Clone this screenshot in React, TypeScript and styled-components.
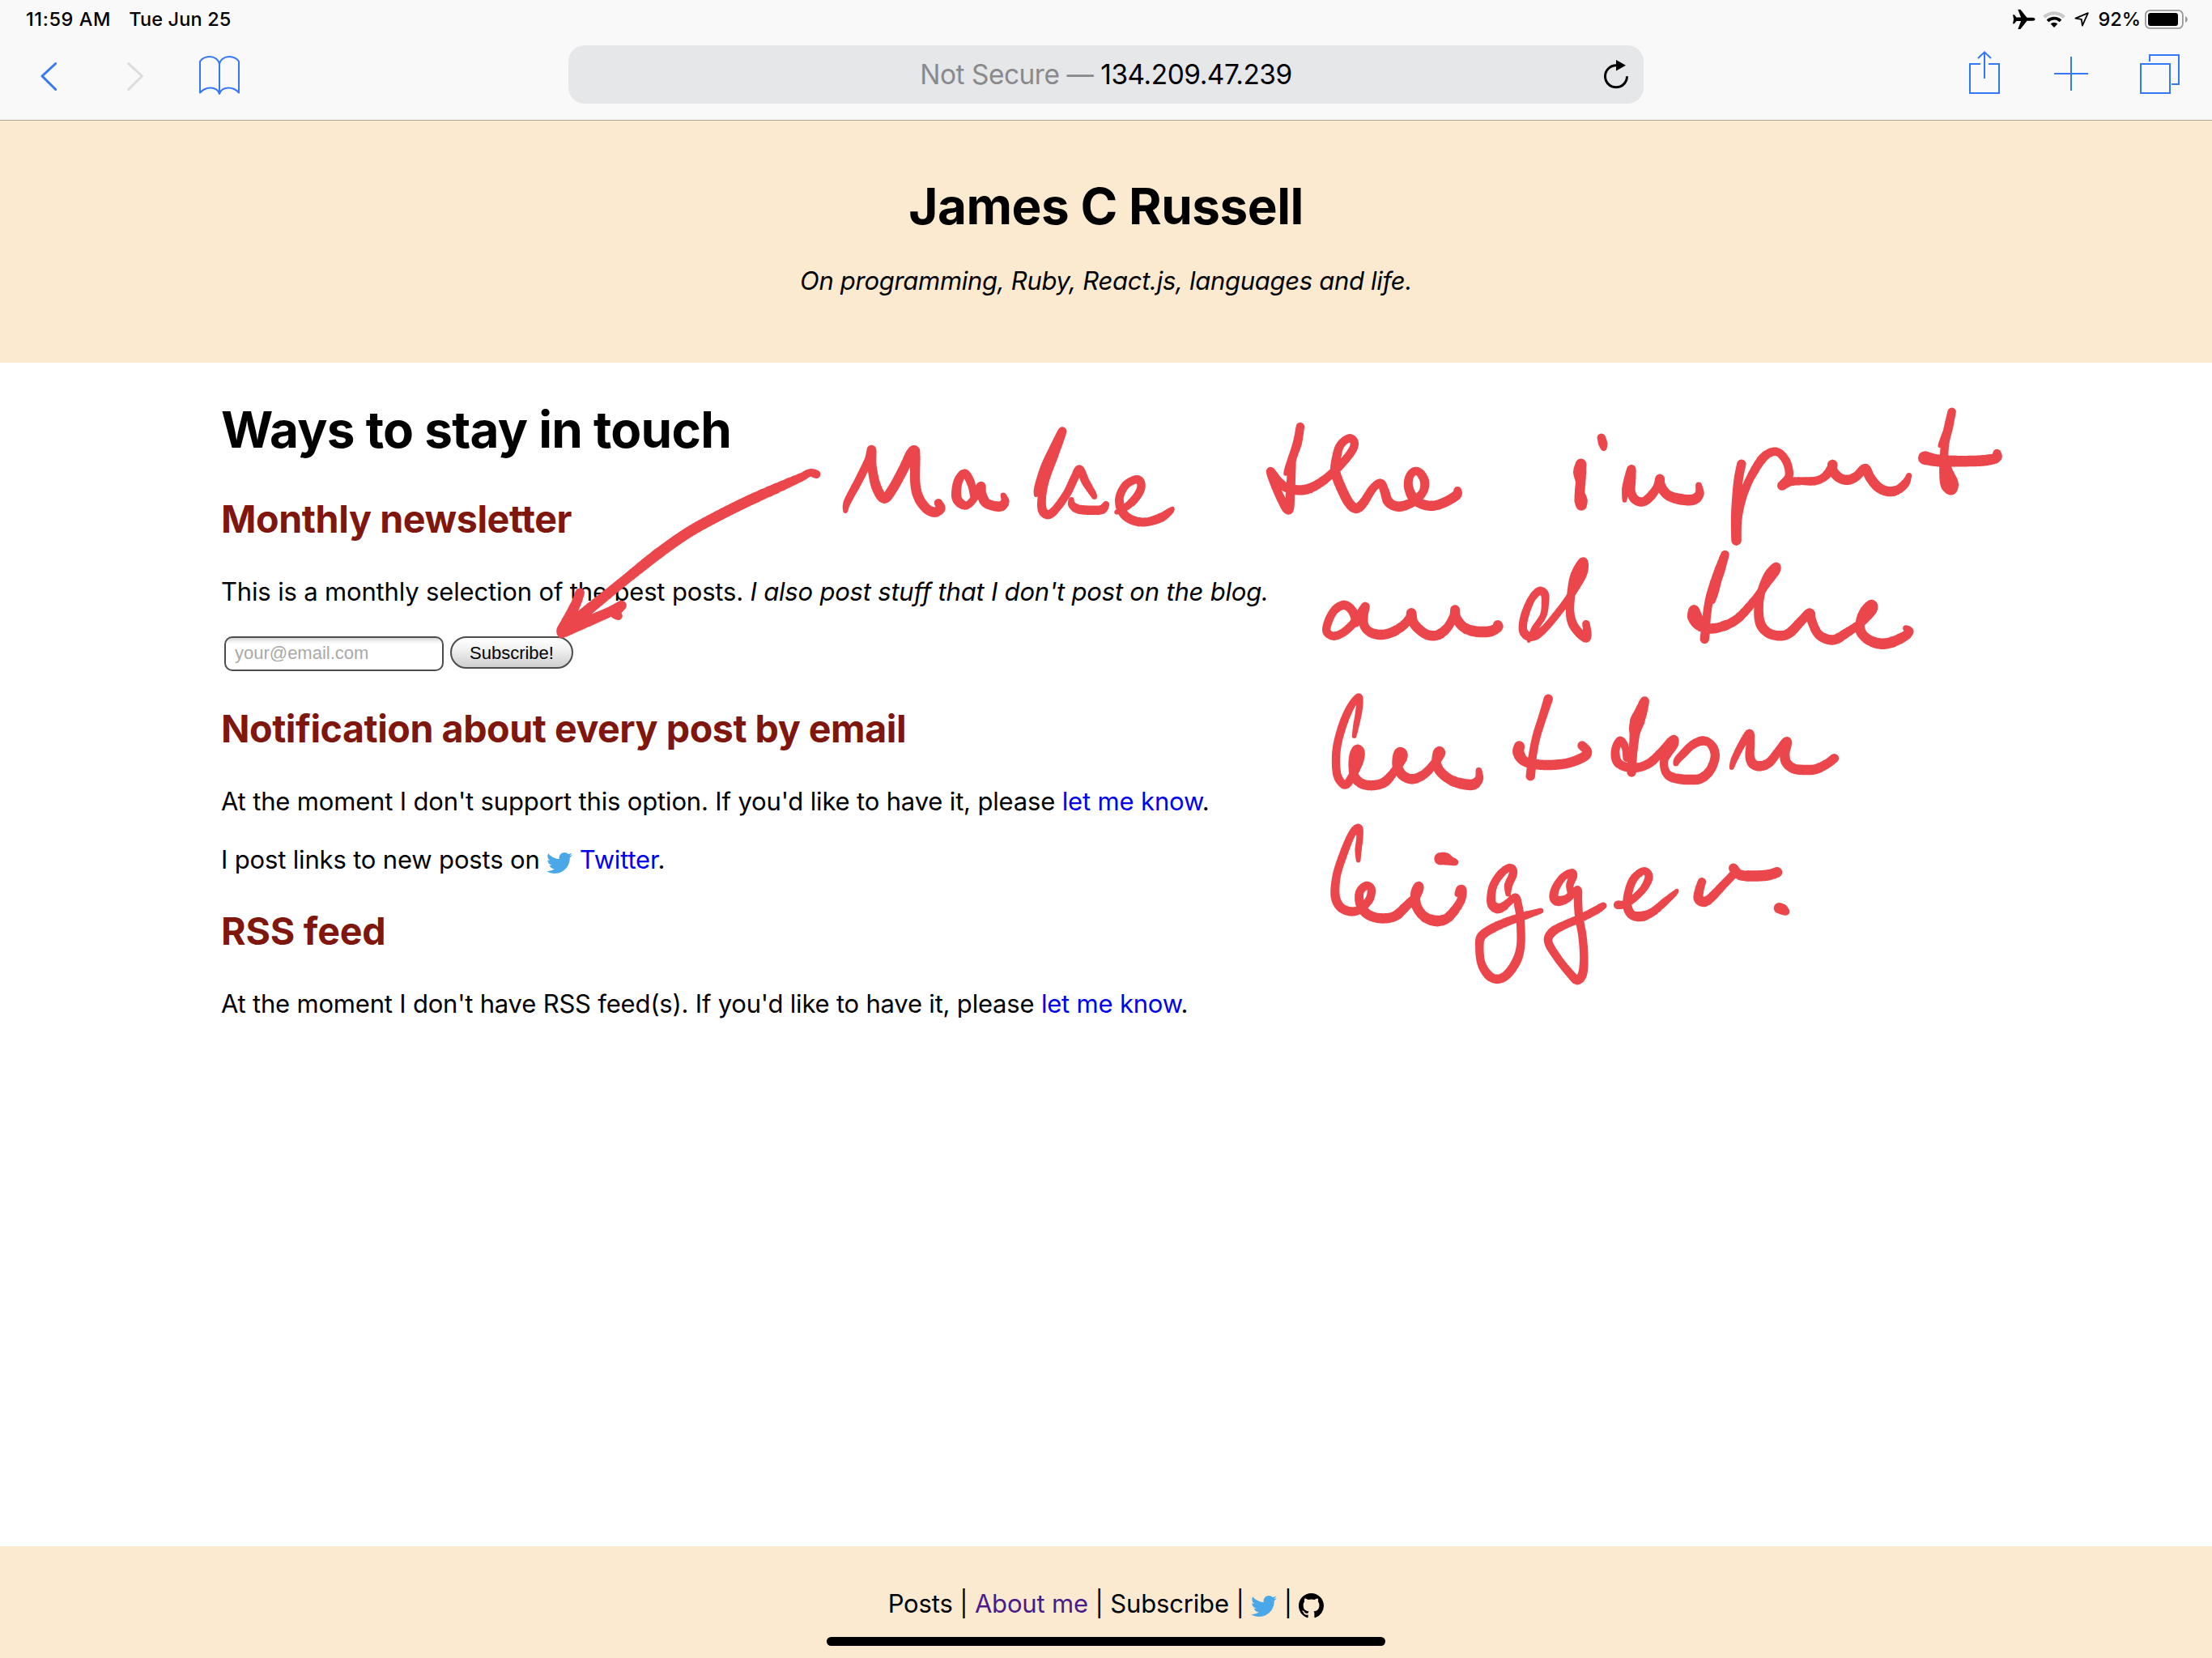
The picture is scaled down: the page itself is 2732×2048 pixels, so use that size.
import React from "react";
import styled, { createGlobalStyle } from "styled-components";
import { FaTwitter } from "react-icons/fa";

const BLUE = "#3478f6";
const SANS = `Inter, "Liberation Sans", sans-serif`;

const GlobalStyle = createGlobalStyle`
  * { box-sizing: border-box; }
  body { margin: 0; background: #fff; color: #000; font-family: ${SANS}; }
  h1, h2, p { margin: 0; font-weight: 400; }
`;

const Screen = styled.div`
  position: relative;
  display: flex;
  flex-direction: column;
  width: 2732px;
  height: 2048px;
  overflow: hidden;
  background: #fff;
`;

/* ---------- browser chrome ---------- */

const Chrome = styled.div`
  flex: none;
  height: 149px;
  background: #f9f9fa;
  border-bottom: 1px solid #b0a592;
`;

const StatusBar = styled.div`
  display: flex;
  align-items: center;
  height: 48px;
  padding: 0 30px 0 32px;
`;

const StatusText = styled.span<{ $track?: number; $left?: number }>`
  font-size: 23.5px;
  font-weight: 500;
  line-height: 48px;
  white-space: pre;
  letter-spacing: ${(p) => p.$track ?? 0}px;
  margin-left: ${(p) => p.$left ?? 0}px;
`;

const StatusIcons = styled.div`
  display: flex;
  align-items: center;
  margin-left: auto;
`;

const NavBar = styled.div`
  display: grid;
  grid-template-columns: 702px 1328px 702px;
  height: 100px;
  padding-top: 8px;
`;

const NavGroup = styled.div<{ $right?: boolean }>`
  display: flex;
  align-items: flex-start;
  justify-content: ${(p) => (p.$right ? "flex-end" : "flex-start")};
  padding: ${(p) => (p.$right ? "0 40px 0 0" : "0 0 0 44px")};
  gap: ${(p) => (p.$right ? 60 : 0)}px;
`;

const Glyph = styled.svg<{ $w: number; $h: number; $ml?: number }>`
  display: block;
  flex: none;
  width: ${(p) => p.$w}px;
  height: ${(p) => p.$h}px;
  margin-left: ${(p) => p.$ml ?? 0}px;
  overflow: visible;
`;

const AddressBar = styled.div`
  display: grid;
  grid-template-columns: 80px 1fr 80px;
  align-items: center;
  height: 72px;
  border-radius: 20px;
  background: #e6e7e8;
`;

const Address = styled.div`
  grid-column: 2;
  text-align: center;
  font-size: 33.4px;
  line-height: 72px;
  letter-spacing: -0.45px;
  white-space: pre;
`;

const Muted = styled.span`
  color: #8a8a8d;
`;

/* ---------- page ---------- */

const Masthead = styled.header`
  flex: none;
  height: 299px;
  padding-top: 68px;
  background: #fbead0;
  text-align: center;
`;

const Title = styled.h1<{ $track: number }>`
  font-size: 62px;
  font-weight: 700;
  line-height: 76px;
  letter-spacing: ${(p) => p.$track}px;
  white-space: nowrap;
`;

const Tagline = styled.p`
  margin-top: 35px;
  font-size: 31px;
  font-style: italic;
  line-height: 38px;
  letter-spacing: -0.3px;
`;

const Main = styled.main`
  flex: 1;
  padding: 45px 273px 0;
`;

const SectionTitle = styled.h2<{ $top: number; $track: number }>`
  margin-top: ${(p) => p.$top}px;
  color: #80170f;
  font-size: 46.6px;
  font-weight: 700;
  line-height: 56px;
  letter-spacing: ${(p) => p.$track}px;
  white-space: nowrap;
`;

const Text = styled.p<{ $top: number; $track?: number }>`
  height: 38px;
  margin-top: ${(p) => p.$top}px;
  font-size: 31px;
  line-height: 38px;
  letter-spacing: ${(p) => p.$track ?? -0.16}px;
  white-space: nowrap;
`;

const Em = styled.em<{ $track: number }>`
  letter-spacing: ${(p) => p.$track}px;
`;

const Link = styled.a<{ $visited?: boolean }>`
  color: ${(p) => (p.$visited ? "#4c1a8a" : "#0000ee")};
  text-decoration: none;
`;

const Form = styled.form`
  display: flex;
  align-items: flex-start;
  gap: 8px;
  height: 43px;
  margin-top: 36px;
  padding-left: 4px;
`;

const EmailInput = styled.input`
  width: 271px;
  height: 43px;
  margin: 0;
  padding: 0 11px 2px;
  border: 2px solid #4c4c4c;
  border-radius: 10px;
  background: linear-gradient(#d6d6d6 0, #f6f6f6 5px, #fff 8px);
  font: 22px/36px "Liberation Sans", Arial, sans-serif;
  outline: none;
  &::placeholder { color: #a9a9a9; opacity: 1; }
`;

const SubmitButton = styled.button`
  width: 152px;
  height: 40px;
  padding: 1px 0 0;
  border: 2px solid #4c4c4c;
  border-radius: 20px;
  background: linear-gradient(#fff, #f3f3f3 35%, #cfcfcf);
  color: #000;
  font: 22px/36px "Liberation Sans", Arial, sans-serif;
`;

const Bird = styled(FaTwitter)<{ $drop: number }>`
  width: 32px;
  height: 32px;
  color: #4aa8e8;
  vertical-align: ${(p) => -p.$drop}px;
`;

const OctocatSvg = styled.svg`
  width: 31px;
  height: 31px;
  vertical-align: -7px;
`;

const Footer = styled.footer`
  display: flex;
  flex: none;
  flex-direction: column;
  align-items: center;
  height: 138px;
  padding-top: 52px;
  background: #fbead0;
`;

const FooterLinks = styled.p`
  height: 38px;
  font-size: 31px;
  line-height: 38px;
  letter-spacing: -0.16px;
  white-space: nowrap;
`;

const HomeIndicator = styled.div`
  width: 690px;
  height: 11px;
  margin-top: 22px;
  border-radius: 6px;
  background: #000;
`;

/* ---------- pencil markup ---------- */

const InkLayer = styled.svg`
  position: absolute;
  inset: 0;
  width: 2732px;
  height: 2048px;
  pointer-events: none;
`;

// x, y, nib width
type Sample = [number, number, number];

interface Sheet {
  origin: [number, number];
  scale: [number, number];
  strokes: Sample[][];
}

const sheets: Sheet[] = [
  {
    // arrow towards the form
    origin: [260, 480],
    scale: [0.4464, 1 / 3],
    strokes: [
      [[1676,317,9],[1658,312,8],[1635,328,9],[1568,368,11],[1490,415,12],[1400,475,12],[1320,535,12],[1240,610,12],[1160,695,11],[1100,760,11],[1040,825,12],[990,880,12],[970,908,8]],
      [[1022,757,10],[1010,800,11],[985,865,12],[970,895,10],[969,912,6]],
      [[1137,804,11],[1100,830,11],[1040,865,12],[985,898,12],[970,910,8]],
      [[1137,806,10],[1120,832,11],[1128,842,9]],
    ],
  },
  {
    origin: [1000, 480],
    scale: [0.4847, 1 / 3],
    strokes: [
      [[91,454,4],[96,420,8],[125,340,9],[150,265,9],[158,227,10],[159,290,10],[170,365,11],[190,407,11],[212,370,11],[240,295,11],[258,240,11],[267,229,11],[269,250,11],[269,350,11],[278,405,11],[298,445,11],[318,458,11],[334,445,10],[328,424,9]],
      [[417,400,6],[411,350,9],[395,314,9],[378,345,10],[374,400,11],[385,426,10],[402,432,8],[420,405,8],[436,362,10],[437,385,11],[447,420,11],[467,434,11],[488,436,11],[498,418,9],[493,395,5]],
      [[577,394,4],[580,365,6],[598,290,8],[625,210,9],[644,158,9],[626,240,8],[602,330,9],[592,400,9],[593,450,10],[607,467,10],[625,450,9],[655,390,9],[675,330,9],[688,299,9],[703,345,9],[722,390,7],[726,402,4]],
      [[667,412,5],[668,430,8],[685,447,10],[720,451,10],[745,448,10],[755,430,7]],
      [[782,458,4],[800,445,7],[825,415,9],[843,375,9],[843,345,9],[830,337,9],[805,358,9],[790,400,9],[792,440,10],[805,472,10],[830,491,10],[860,494,9],[895,478,10],[918,455,7],[925,444,3]],
      [[1250,141,9],[1243,200,10],[1230,260,9],[1228,300,9],[1225,380,10],[1220,450,10],[1195,390,9],[1174,308,9],[1195,345,10],[1220,370,10],[1260,375,11],[1300,350,10],[1345,295,9],[1380,235,9],[1388,200,9],[1375,184,9],[1352,210,9],[1342,260,10],[1340,310,11],[1355,370,11],[1375,425,11],[1393,444,11],[1410,425,10],[1435,370,9],[1455,350,9],[1465,380,10],[1475,420,11],[1500,437,11],[1535,422,10],[1562,385,9],[1567,345,10],[1555,312,9],[1540,307,9],[1528,328,9],[1526,365,10],[1538,405,11],[1560,428,11],[1590,434,11],[1620,420,11],[1648,395,11],[1651,377,8]],
      [[1230,250,8],[1220,290,7],[1213,315,4]],
    ],
  },
  {
    origin: [1750, 480],
    scale: [0.4847, 1 / 3],
    strokes: [
      [[470,182,9],[474,204,10],[476,220,6]],
      [[418,280,12],[415,310,15],[417,345,11],[415,385,11],[418,415,15],[419,432,12]],
      [[529,414,4],[532,370,8],[540,320,8],[547,298,9],[546,340,10],[545,380,10],[555,410,10],[575,420,10],[595,400,10],[612,365,9],[619,334,10],[621,360,11],[640,395,11],[675,411,12],[705,411,12],[720,390,10],[718,358,6]],
      [[827,280,10],[820,330,10],[815,400,10],[813,480,11],[814,563,11],[816,480,11],[830,400,9],[850,330,9],[880,260,10],[905,235,9],[925,240,9],[943,275,9],[948,325,9],[930,360,10],[950,346,9],[980,343,8],[1015,342,9],[1040,325,9],[1058,290,10],[1059,282,11],[1060,305,11],[1078,332,11],[1100,338,11],[1120,325,10],[1142,296,10],[1155,330,11],[1175,365,11],[1200,381,11],[1225,375,10],[1245,350,9],[1254,322,5]],
      [[1363,86,9],[1355,140,10],[1346,200,9],[1343,260,9],[1342,320,9],[1348,360,11],[1362,374,12],[1369,350,9],[1358,315,9],[1350,285,7]],
      [[1352,150,8],[1340,190,6],[1332,212,3]],
      [[1354,345,11],[1358,360,12]],
      [[1294,257,15],[1330,267,13],[1380,269,12],[1440,267,12],[1476,257,11],[1478,240,9]],
      [[-155,870,8],[-164,825,10],[-185,802,10],[-209,820,9],[-225,860,9],[-230,900,9],[-212,917,9],[-187,903,9],[-162,870,9],[-142,830,10],[-131,807,9],[-135,840,9],[-135,875,10],[-122,900,10],[-97,912,11],[-67,905,11],[-37,880,10],[-19,850,9],[-14,832,11],[-10,865,11],[8,895,11],[30,914,11],[55,912,11],[78,885,10],[93,845,9],[97,819,10],[100,850,11],[120,885,11],[150,900,12],[185,900,12],[206,885,11],[206,875,10]],
      [[285,935,3],[300,890,7],[322,840,7],[327,790,8],[325,760,9],[312,750,9],[292,780,8],[275,840,9],[270,890,9],[280,915,10],[300,916,10],[325,890,8],[360,830,8],[390,770,8],[422,690,9],[427,645,8],[418,645,8],[400,695,8],[393,760,9],[390,820,9],[395,865,10],[410,900,10],[430,924,10],[434,905,9],[431,872,8]],
      [[785,615,9],[770,680,12],[755,740,11],[744,790,9],[738,850,9],[735,900,10],[733,928,10]],
      [[770,690,9],[760,755,7],[754,790,4]],
      [[706,822,12],[708,845,17],[718,870,15],[738,888,11],[770,885,11],[815,855,10],[860,785,9],[892,720,9],[914,675,10],[914,660,9],[895,690,9],[878,750,9],[871,810,10],[875,870,11],[895,905,11],[925,916,11],[950,905,11],[980,860,10],[1001,831,10],[1006,860,10],[1020,905,10],[1040,926,11],[1065,930,11],[1095,905,10],[1130,870,9],[1160,825,9],[1163,802,9],[1153,800,8],[1135,835,9],[1129,890,11],[1145,925,11],[1175,944,12],[1205,942,12],[1240,920,11],[1255,900,9],[1246,888,6]],
    ],
  },
  {
    origin: [1600, 820],
    scale: [0.4592, 1 / 3],
    strokes: [
      [[158,268,4],[163,230,6],[170,180,7],[173,140,7],[169,124,8],[150,155,8],[130,215,9],[114,290,9],[109,350,9],[112,410,9],[125,442,9],[138,446,9],[155,410,9],[172,360,9],[175,325,9],[165,315,9],[157,340,10],[155,380,10],[160,420,10],[180,445,11],[210,450,11],[240,438,11],[265,400,9],[288,350,10],[288,328,9],[278,326,9],[273,350,10],[275,385,11],[290,415,11],[315,427,11],[345,410,10],[370,375,9],[390,335,10],[388,322,9],[382,330,10],[379,365,10],[390,400,11],[420,432,11],[455,446,12],[480,446,12],[494,425,9],[493,395,6]],
      [[680,130,10],[665,195,9],[648,270,9],[638,340,9],[634,390,10],[632,416,10]],
      [[602,306,12],[600,330,13],[615,360,11],[650,373,11],[700,374,11],[740,365,11],[775,345,11],[785,325,10],[771,303,10]],
      [[939,138,10],[930,175,14],[920,210,17],[914,240,14],[912,265,11],[908,330,9],[905,370,10],[904,402,10]],
      [[890,350,7],[887,310,8],[874,284,9],[862,310,9],[861,345,10],[870,370,10],[895,384,10],[925,383,10],[955,365,10],[985,325,9],[1010,288,10],[1019,280,9],[1017,300,10],[1003,330,9],[992,355,9],[993,390,9],[1005,415,10],[1030,426,11],[1060,429,11],[1090,425,11],[1115,395,10],[1128,350,10],[1125,315,10],[1110,290,9],[1090,286,10],[1065,303,9],[1045,330,9],[1028,355,8],[1023,370,5]],
      [[1173,385,4],[1180,355,7],[1200,300,8],[1221,258,9],[1224,290,9],[1222,340,10],[1230,370,11],[1250,379,11],[1275,365,10],[1298,325,9],[1320,288,10],[1322,300,10],[1316,330,11],[1320,365,11],[1340,388,11],[1370,393,11],[1400,390,11],[1430,370,10],[1449,350,10]],
      [[169,728,4],[169,690,7],[173,640,7],[169,608,9],[150,635,8],[125,720,9],[110,790,9],[107,860,10],[120,900,10],[145,917,10],[170,912,9],[198,875,9],[204,835,9],[190,822,9],[173,845,9],[173,885,10],[187,920,11],[210,938,11],[240,943,11],[270,933,11],[300,895,10],[325,860,9],[334,830,9],[330,823,9],[323,850,11],[325,895,11],[345,935,11],[375,952,12],[405,945,11],[430,910,10],[447,870,9],[450,837,8],[442,835,8],[436,853,6]],
      [[390,722,14],[402,722,14],[415,729,10],[429,735,7]],
      [[572,853,5],[573,820,9],[585,780,9],[583,760,9],[570,758,8],[548,785,9],[530,830,9],[527,885,10],[540,905,11],[555,903,10],[572,885,8],[592,865,8],[600,900,9],[605,950,9],[606,1040,9],[595,1100,10],[570,1150,10],[545,1168,10],[520,1155,10],[500,1110,9],[495,1050,9],[500,1010,10],[530,980,10],[580,950,9],[625,930,8],[660,915,5]],
      [[740,850,6],[738,820,8],[747,785,9],[742,774,8],[720,790,8],[700,830,9],[695,865,10],[707,879,11],[730,870,9],[748,848,8],[760,838,8],[760,880,9],[763,940,9],[772,1010,9],[776,1090,9],[772,1150,10],[758,1172,10],[740,1150,9],[705,1090,9],[680,1030,9],[690,995,10],[720,970,9],[770,940,9],[810,912,9],[828,896,7]],
      [[867,893,9],[882,892,8],[905,875,8],[935,835,8],[950,795,9],[945,771,8],[930,771,8],[908,800,9],[895,850,9],[893,900,10],[905,930,10],[930,936,11],[960,920,9],[995,880,8],[1020,850,5],[1026,840,3]],
      [[1093,808,9],[1086,840,10],[1084,870,11],[1097,882,11],[1115,870,10],[1150,820,9],[1180,775,9],[1178,757,10],[1195,782,11],[1230,786,12],[1270,783,12],[1296,772,11]],
      [[1301,905,12],[1310,910,12],[1319,918,8]],
    ],
  },
];

const spline = (a: number, b: number, c: number, d: number, t: number) =>
  0.5 * (2 * b + (c - a) * t + (2 * a - 5 * b + 4 * c - d) * t * t + (3 * b - a - 3 * c + d) * t * t * t);

// Sweeps a round nib of varying width along each stroke.
function inkPath({ origin, scale, strokes }: Sheet): string {
  const out: string[] = [];
  for (const stroke of strokes) {
    const pts = stroke.map(([x, y, w]) => [origin[0] + x * scale[0], origin[1] + y * scale[1], w]);
    for (let i = 0; i < pts.length - 1; i++) {
      const p = [pts[Math.max(i - 1, 0)], pts[i], pts[i + 1], pts[Math.min(i + 2, pts.length - 1)]];
      const steps = Math.max(2, Math.ceil(Math.hypot(p[2][0] - p[1][0], p[2][1] - p[1][1]) / 1.2));
      for (let s = 0; s <= steps; s++) {
        const t = s / steps;
        const x = spline(p[0][0], p[1][0], p[2][0], p[3][0], t);
        const y = spline(p[0][1], p[1][1], p[2][1], p[3][1], t);
        const r = (p[1][2] + (p[2][2] - p[1][2]) * t) / 2 + 0.75;
        out.push(
          `M${(x - r).toFixed(2)} ${y.toFixed(2)}a${r.toFixed(2)} ${r.toFixed(2)} 0 1 0 ${(2 * r).toFixed(2)} 0a${r.toFixed(2)} ${r.toFixed(2)} 0 1 0 ${(-2 * r).toFixed(2)} 0z`
        );
      }
    }
  }
  return out.join("");
}

const inkPaths = sheets.map(inkPath);

/* ---------- icons ---------- */

const Airplane = () => (
  <Glyph $w={28} $h={26} viewBox="0 0 28 26">
    <path
      fill="#000"
      d="M27.5 12.8c0 1.3-1.5 2-3.2 2h-6.8L9.4 24.9H6.3l3.8-9.9H4.5L1.8 18.3H0l1.1-5.5L0 7.3h1.8l2.7 3.3h5.6L6.3.7h3.1l8.1 10.1h6.8c1.7 0 3.2.7 3.2 2z"
    />
  </Glyph>
);

const Wifi = () => (
  <Glyph $w={28} $h={20} $ml={9} viewBox="0 0 28 20">
    <path d="M1.6 7.2a17.8 17.8 0 0 1 24.8 0" fill="none" stroke="#c9c9ca" strokeWidth="4" />
    <path d="M6 11.8a11.5 11.5 0 0 1 16 0" fill="none" stroke="#000" strokeWidth="3.8" />
    <path d="M14 20l-4.3-4.4a6.2 6.2 0 0 1 8.6 0z" fill="#000" />
  </Glyph>
);

const Location = () => (
  <Glyph $w={18} $h={18} $ml={11} viewBox="0 0 18 18">
    <path d="M16.8 1.2L9.9 16.6 8.8 8.9 1.4 7.7z" fill="none" stroke="#000" strokeWidth="1.8" strokeLinejoin="round" />
  </Glyph>
);

const Battery = () => (
  <Glyph $w={53} $h={24} $ml={5} viewBox="0 0 53 24">
    <rect x="0.9" y="0.9" width="46" height="22" rx="5.5" fill="none" stroke="#99999b" strokeWidth="1.8" />
    <rect x="4" y="4" width="37" height="16" rx="3" fill="#000" />
    <path d="M50 8c1.7.8 2.8 2.3 2.8 4s-1.1 3.2-2.8 4z" fill="#99999b" />
  </Glyph>
);

const Chevron = ({ back }: { back?: boolean }) => (
  <Glyph $w={32} $h={72} $ml={back ? 0 : 75} viewBox="0 0 32 72">
    <path
      d={back ? "M24.7 22.5L8 38l16.7 16.5" : "M7.7 22.5L24.4 38 7.7 54.5"}
      fill="none"
      stroke={back ? BLUE : "#dcdcdd"}
      strokeWidth="3"
      strokeLinecap="round"
      strokeLinejoin="round"
    />
  </Glyph>
);

const Book = () => (
  <Glyph $w={50} $h={72} $ml={63} viewBox="0 0 50 72" fill="none" stroke={BLUE} strokeWidth="2" strokeLinejoin="round">
    <path d="M25 23C24 17.5 19 14 13 14S2.500 17 1 20v38.500C4 55 9 52.500 14 52.500S24 55 25 60c1-5 6-7.500 11-7.500s10 2.500 13 6V20c-1.500-3-6-6-12-6s-11 3.500-12 9z" />
    <path d="M25 21v39" />
  </Glyph>
);

const Share = () => (
  <Glyph $w={38} $h={72} viewBox="0 0 38 72" fill="none" stroke={BLUE} strokeWidth="2">
    <path d="M14 23H1v36h36V23H24M19 41V8.500M11 16l8-7.700L27 16" />
  </Glyph>
);

const Plus = () => (
  <Glyph $w={42} $h={72} $ml={7} viewBox="0 0 42 72" fill="none" stroke={BLUE} strokeWidth="2">
    <path d="M21 14v42M0 35h42" />
  </Glyph>
);

const Tabs = () => (
  <Glyph $w={49} $h={72} $ml={4} viewBox="0 0 49 72" fill="none" stroke={BLUE} strokeWidth="2">
    <path d="M1 23h36v36H1zM12 20v-8h36v36h-9" />
  </Glyph>
);

const Reload = () => (
  <Glyph $w={32} $h={38} $ml={29} viewBox="0 0 32 38">
    <path d="M30.500 21.300A13.500 13.500 0 1 1 17 7.800" fill="none" stroke="#000" strokeWidth="3" />
    <path d="M17 1l12 6.700L17 14.600z" fill="#000" />
  </Glyph>
);

const Octocat = () => (
  <OctocatSvg viewBox="0 0 16 16">
    <path
      fillRule="evenodd"
      d="M8 0C3.580 0 0 3.580 0 8c0 3.540 2.290 6.530 5.470 7.590.4.070.550-.170.550-.380 0-.190-.010-.820-.010-1.490-2.010.370-2.530-.490-2.690-.940-.090-.230-.480-.940-.820-1.130-.280-.150-.680-.520-.010-.530.630-.010 1.080.580 1.230.820.720 1.210 1.870.870 2.330.660.070-.520.280-.870.510-1.070-1.780-.2-3.640-.890-3.640-3.950 0-.870.310-1.590.820-2.150-.080-.2-.360-1.020.080-2.120 0 0 .670-.210 2.200.820.640-.180 1.320-.270 2-.270s1.360.090 2 .270c1.530-1.040 2.200-.820 2.200-.820.440 1.100.160 1.920.080 2.120.510.560.820 1.270.820 2.150 0 3.070-1.870 3.750-3.650 3.950.290.250.540.730.540 1.480 0 1.070-.010 1.930-.010 2.200 0 .210.150.460.550.380A8.010 8.010 0 0 0 16 8c0-4.420-3.580-8-8-8z"
    />
  </OctocatSvg>
);

export default function App() {
  return (
    <Screen>
      <GlobalStyle />
      <Chrome>
        <StatusBar>
          <StatusText $track={0.6}>11:59 AM</StatusText>
          <StatusText $track={0.15} $left={22}>Tue Jun 25</StatusText>
          <StatusIcons>
            <Airplane />
            <Wifi />
            <Location />
            <StatusText $left={11}>92%</StatusText>
            <Battery />
          </StatusIcons>
        </StatusBar>
        <NavBar>
          <NavGroup>
            <Chevron back />
            <Chevron />
            <Book />
          </NavGroup>
          <AddressBar>
            <Address>
              <Muted>Not Secure — </Muted>134.209.47.239
            </Address>
            <Reload />
          </AddressBar>
          <NavGroup $right>
            <Share />
            <Plus />
            <Tabs />
          </NavGroup>
        </NavBar>
      </Chrome>

      <Masthead>
        <Title $track={-0.5}>James C Russell</Title>
        <Tagline>On programming, Ruby, React.js, languages and life.</Tagline>
      </Masthead>

      <Main>
        <Title $track={-0.75}>Ways to stay in touch</Title>

        <SectionTitle $top={44} $track={-0.4}>Monthly newsletter</SectionTitle>
        <Text $top={43}>
          This is a monthly selection of the best posts. <Em $track={-0.2}>I also post stuff that I don't post on the blog.</Em>
        </Text>
        <Form onSubmit={(e) => e.preventDefault()}>
          <EmailInput type="email" placeholder="your@email.com" />
          <SubmitButton type="submit">Subscribe!</SubmitButton>
        </Form>

        <SectionTitle $top={43} $track={-0.46}>Notification about every post by email</SectionTitle>
        <Text $top={43}>
          At the moment I don't support this option. If you'd like to have it, please <Link>let me know</Link>.
        </Text>
        <Text $top={34}>
          I post links to new posts on <Bird $drop={9} /> <Link>Twitter</Link>.
        </Text>

        <SectionTitle $top={41} $track={-0.2}>RSS feed</SectionTitle>
        <Text $top={43} $track={-0.2}>
          At the moment I don't have RSS feed(s). If you'd like to have it, please <Link>let me know</Link>.
        </Text>
      </Main>

      <Footer>
        <FooterLinks>
          Posts | <Link $visited>About me</Link> | Subscribe | <Bird $drop={8} /> | <Octocat />
        </FooterLinks>
        <HomeIndicator />
      </Footer>

      <InkLayer viewBox="0 0 2732 2048" role="img" aria-label="Make the input and the button bigger.">
        {inkPaths.map((d, i) => (
          <path key={i} d={d} fill="#ea464b" />
        ))}
      </InkLayer>
    </Screen>
  );
}
